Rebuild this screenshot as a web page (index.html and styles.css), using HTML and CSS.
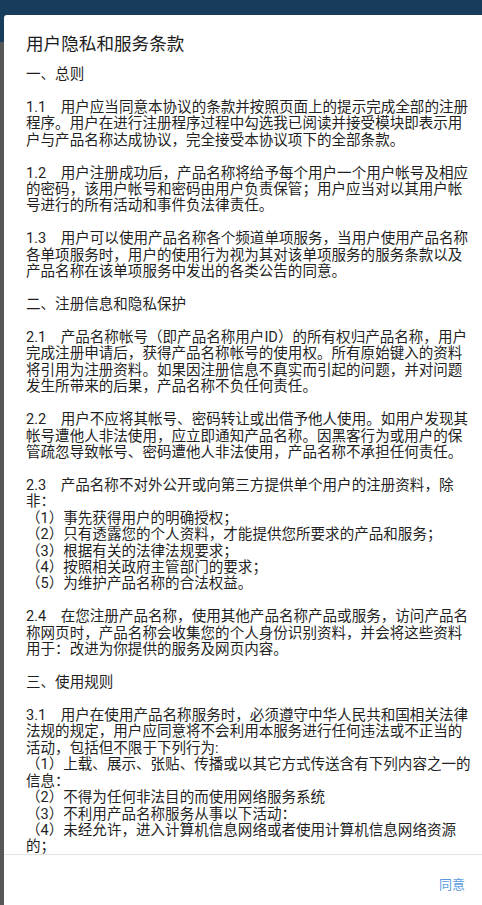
FILE: index.html
```html
<!DOCTYPE html>
<html lang="zh-CN">
<head>
<meta charset="utf-8">
<title>用户隐私和服务条款</title>
<link rel="stylesheet" href="styles.css">
</head>
<body>
<div class="dialog">
  <h1 class="title">用户隐私和服务条款</h1>
  <div class="scroll">
    <p class="para">一、总则</p>
    <p class="para">1.1　用户应当同意本协议的条款并按照页面上的提示完成全部的注册<br>程序。用户在进行注册程序过程中勾选我已阅读并接受模块即表示用<br>户与产品名称达成协议，完全接受本协议项下的全部条款。</p>
    <p class="para">1.2　用户注册成功后，产品名称将给予每个用户一个用户帐号及相应<br>的密码，该用户帐号和密码由用户负责保管；用户应当对以其用户帐<br>号进行的所有活动和事件负法律责任。</p>
    <p class="para">1.3　用户可以使用产品名称各个频道单项服务，当用户使用产品名称<br>各单项服务时，用户的使用行为视为其对该单项服务的服务条款以及<br>产品名称在该单项服务中发出的各类公告的同意。</p>
    <p class="para">二、注册信息和隐私保护</p>
    <p class="para">2.1　产品名称帐号（即产品名称用户ID）的所有权归产品名称，用户<br>完成注册申请后，获得产品名称帐号的使用权。所有原始键入的资料<br>将引用为注册资料。如果因注册信息不真实而引起的问题，并对问题<br>发生所带来的后果，产品名称不负任何责任。</p>
    <p class="para">2.2　用户不应将其帐号、密码转让或出借予他人使用。如用户发现其<br>帐号遭他人非法使用，应立即通知产品名称。因黑客行为或用户的保<br>管疏忽导致帐号、密码遭他人非法使用，产品名称不承担任何责任。</p>
    <p class="para">2.3　产品名称不对外公开或向第三方提供单个用户的注册资料，除<br>非：<br>（1）事先获得用户的明确授权；<br>（2）只有透露您的个人资料，才能提供您所要求的产品和服务；<br>（3）根据有关的法律法规要求；<br>（4）按照相关政府主管部门的要求；<br>（5）为维护产品名称的合法权益。</p>
    <p class="para">2.4　在您注册产品名称，使用其他产品名称产品或服务，访问产品名<br>称网页时，产品名称会收集您的个人身份识别资料，并会将这些资料<br>用于：改进为你提供的服务及网页内容。</p>
    <p class="para">三、使用规则</p>
    <p class="para">3.1　用户在使用产品名称服务时，必须遵守中华人民共和国相关法律<br>法规的规定，用户应同意将不会利用本服务进行任何违法或不正当的<br>活动，包括但不限于下列行为:<br>（1）上载、展示、张贴、传播或以其它方式传送含有下列内容之一的<br>信息：<br>（2）不得为任何非法目的而使用网络服务系统<br>（3）不利用产品名称服务从事以下活动：<br>（4）未经允许，进入计算机信息网络或者使用计算机信息网络资源<br>的；<br>（5）未经允许，对计算机信息网络功能进行删除、修改或者增加的；</p>
  </div>
  <div class="actions">
    <span class="btn">同意</span>
  </div>
</div>
</body>
</html>
```

FILE: styles.css
```css
html, body {
  margin: 0;
  padding: 0;
}
body {
  width: 482px;
  height: 905px;
  overflow: hidden;
  background: linear-gradient(#183d5c 0, #183d5c 42px, #575757 42px, #575757 100%);
  font-family: Roboto, "Noto Sans CJK SC", sans-serif;
}
.dialog {
  margin: 15px 0 0 4px;
  width: 478px;
  height: 890px;
  background: #ffffff;
  border-radius: 3px 0 0 0;
  display: flex;
  flex-direction: column;
}
.title {
  margin: 0;
  padding: 17px 0 0 22px;
  height: 24px;
  line-height: 24px;
  font-size: 17.6px;
  font-weight: normal;
  color: #1c1c1c;
  white-space: nowrap;
}
.scroll {
  padding: 11px 0 0 22px;
  height: 787px;
  overflow: hidden;
  border-bottom: 1px solid #e4e4e4;
}
.para {
  margin: 0 0 16.43px 0;
  font-size: 14.55px;
  line-height: 16.43px;
  color: #1f1f1f;
  white-space: nowrap;
}
.actions {
  flex: 1;
  display: flex;
  justify-content: flex-end;
  align-items: center;
  padding: 6px 17px 0 0;
}
.btn {
  font-size: 13px;
  color: #5a9be0;
}
```
